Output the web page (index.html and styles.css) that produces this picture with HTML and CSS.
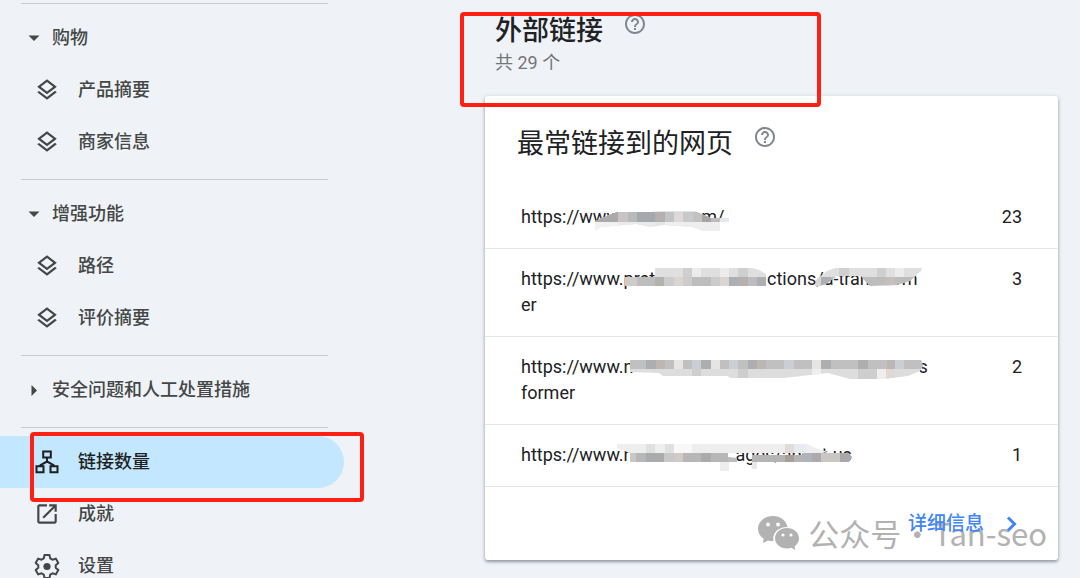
FILE: index.html
```html
<!DOCTYPE html>
<html lang="zh-CN">
<head>
<meta charset="utf-8">
<meta name="viewport" content="width=device-width, initial-scale=1">
<title>外部链接</title>
<link rel="stylesheet" href="styles.css">
</head>
<body>
<svg class="defs" aria-hidden="true">
  <symbol id="layers" viewBox="0 0 24 24"><path d="M11.99 18.54l-7.37-5.73L3 14.07l9 7 9-7-1.63-1.27zM12 16l7.36-5.73L21 9l-9-7-9 7 1.63 1.27L12 16zm0-11.47L17.74 9 12 13.47 6.26 9 12 4.53z"/></symbol>
  <symbol id="help" viewBox="0 0 24 24"><path d="M11 18h2v-2h-2v2zm1-16C6.480 2 2 6.480 2 12s4.480 10 10 10 10-4.480 10-10S17.520 2 12 2zm0 18c-4.410 0-8-3.590-8-8s3.590-8 8-8 8 3.590 8 8-3.590 8-8 8zm0-14c-2.210 0-4 1.790-4 4h2c0-1.100.9-2 2-2s2 .9 2 2c0 2-3 1.750-3 5h2c0-2.250 3-2.500 3-5 0-2.210-1.790-4-4-4z"/></symbol>
</svg>
<div class="app">
  <nav class="sidebar" aria-label="导航">
    <section class="group">
      <button class="group-title" type="button"><svg class="caret" viewBox="0 0 12 12"><path d="M0.500 3.500h11L6 9z"/></svg>购物</button>
      <a class="item" href="#"><svg class="icon"><use href="#layers"/></svg>产品摘要</a>
      <a class="item" href="#"><svg class="icon"><use href="#layers"/></svg>商家信息</a>
    </section>
    <section class="group">
      <button class="group-title" type="button"><svg class="caret" viewBox="0 0 12 12"><path d="M0.500 3.500h11L6 9z"/></svg>增强功能</button>
      <a class="item" href="#"><svg class="icon"><use href="#layers"/></svg>路径</a>
      <a class="item" href="#"><svg class="icon"><use href="#layers"/></svg>评价摘要</a>
    </section>
    <section class="group">
      <button class="group-title" type="button"><svg class="caret" viewBox="0 0 12 12"><path d="M3.500 1v11L9 6.500z"/></svg>安全问题和人工处置措施</button>
    </section>
    <section class="group">
      <a class="item active" href="#"><svg class="icon" viewBox="0 0 26 26"><g fill="none" stroke="currentColor" stroke-width="2"><path d="M9.200 2.500h7.600v6H9.200zM2.500 17.200h7v6h-7zM16.500 17.200h7v6h-7zM13 8.500V13M6.500 17.200V16L13 12.500l6.500 3.500v1.200"/></g></svg>链接数量<span class="mark mark-item"></span></a>
      <a class="item" href="#"><svg class="icon" viewBox="0 0 24 24"><path d="M19 19H5V5h7V3H5c-1.110 0-2 .9-2 2v14c0 1.100.89 2 2 2h14c1.100 0 2-.9 2-2v-7h-2v7zM14 3v2h3.590l-9.830 9.830 1.410 1.410L19 6.410V10h2V3h-7z"/></svg>成就</a>
      <a class="item" href="#"><svg class="icon" viewBox="0 0 26 26"><path fill="none" stroke="currentColor" stroke-width="2" stroke-linejoin="round" d="M10.500 2h5l.7 3.400 2.300 1.300 3.300-1.100 2.500 4.300-2.600 2.300v2.600l2.600 2.300-2.500 4.300-3.300-1.100-2.300 1.300-.7 3.400h-5l-.7-3.400-2.300-1.300-3.300 1.100-2.500-4.300 2.600-2.300v-2.600L1.700 9.900l2.500-4.300 3.300 1.100 2.300-1.300z"/><circle cx="13" cy="13.500" r="3.600"/></svg>设置</a>
    </section>
  </nav>

  <main class="main">
    <header class="page-head">
      <h1>外部链接<button class="help" type="button" aria-label="帮助"><svg><use href="#help"/></svg></button></h1>
      <p>共 29 个</p>
      <span class="mark mark-head"></span>
    </header>

    <section class="card">
      <h2>最常链接到的网页<button class="help" type="button" aria-label="帮助"><svg><use href="#help"/></svg></button></h2>
      <table>
        <tbody>
          <tr>
            <td class="url">https://www<span class="gap gap-a"></span>om/
              <svg class="mosaic" viewBox="485 187 480 61" width="480" height="61">
                <clipPath id="c1"><path d="M595 221l14-6 8-3h33l10-1h35l16 7h18v4h-9v9h-16l-12-4-27-2-15 2-14-3-35 3-6 4h-10z"/></clipPath>
                <g clip-path="url(#c1)">
                  <path fill="#e4e4e4" d="M595 210h134v21H595z"/>
                  <path fill="#aaaaaa" d="M595 212h23v10h-23z"/><path fill="#c8c4c4" d="M618 212h10v10h-10z"/><path fill="#b8babc" d="M628 212h9v10h-9z"/><path fill="#a5a9ad" d="M637 212h18v10h-18z"/><path fill="#b5b0af" d="M655 212h10v10h-10z"/><path fill="#c1c3c4" d="M665 212h9v10h-9z"/><path fill="#ded9d8" d="M674 212h9v10h-9z"/><path fill="#c7c9ca" d="M683 212h10v10h-10z"/><path fill="#c2c2c1" d="M693 212h9v10h-9z"/><path fill="#a8a5a2" d="M702 212h9v10h-9z"/><path fill="#bcbcbd" d="M711 212h9v10h-9z"/>
                  <path fill="#f1f1f1" d="M595 222h23v10h-23z"/><path fill="#e9eaeb" d="M618 222h37v9h-37z"/><path fill="#eeeeee" d="M665 222h55v9h-55z"/><path fill="#e5e9ee" d="M720 218h9v4h-9z"/>
                </g>
              </svg>
            </td>
            <td class="count">23</td>
          </tr>
          <tr>
            <td class="url">https://www.pret<span class="gap gap-b"></span>ctions/a-transform<br>er
              <svg class="mosaic" viewBox="485 249 480 87" width="480" height="87">
                <clipPath id="c2"><path d="M625 277h30v-9h97l7 2 7 4v12H625zM815 286l2-7 10-8 8-3h87l-1 3-11 10-13 4-27 1-6-6-3-4-24 0-11 8-7 2z"/></clipPath>
                <g clip-path="url(#c2)">
                  <path fill="#dfdfdf" d="M625 267h300v10H625z"/><path fill="#ececec" d="M692 267h9v10h-9zM720 267h9v10h-9zM895 267h9v10h-9z"/><path fill="#cecfcf" d="M683 267h9v10h-9zM738 267h10v10h-10zM839 267h10v10h-10zM877 267h9v10h-9z"/>
                  <path fill="#bdbdbe" d="M625 277h300v10H625z"/><path fill="#cccccc" d="M625 277h12v10h-12zM664 277h10v10h-10zM683 277h9v10h-9zM711 277h9v10h-9z"/><path fill="#dbd5d2" d="M674 277h9v10h-9zM720 277h9v10h-9zM815 277h6v10h-6z"/><path fill="#b5b1ae" d="M655 277h9v10h-9zM738 277h10v10h-10z"/><path fill="#acb0b5" d="M729 277h9v10h-9zM757 277h9v10h-9zM821 277h10v10h-10z"/><path fill="#c6bfbb" d="M886 277h9v10h-9z"/>
                </g>
              </svg>
            </td>
            <td class="count">3</td>
          </tr>
          <tr>
            <td class="url">https://www.n<span class="gap gap-c"></span>s<br>former
              <svg class="mosaic" viewBox="485 337 480 87" width="480" height="87">
                <clipPath id="c3"><path d="M630 360h291l2 6-3 5-12 5-25 3h-33l-22-6-44 5h-53l-4-2H663l-4-3-29-1z"/></clipPath>
                <g clip-path="url(#c3)">
                  <path fill="#dddddd" d="M630 359h294v20H630z"/>
                  <path fill="#c0c0c0" d="M630 360h294v9H630z"/><path fill="#acaeb0" d="M646 360h10v9h-10zM701 360h10v9h-10zM748 360h10v9h-10zM821 360h10v9h-10zM858 360h10v9h-10z"/><path fill="#bdb6b2" d="M656 360h9v9h-9zM757 360h9v9h-9zM887 360h8v9h-8z"/><path fill="#e7e5e3" d="M674 360h9v9h-9zM711 360h9v9h-9zM812 360h9v9h-9z"/><path fill="#cbced4" d="M692 360h9v9h-9zM729 360h9v9h-9zM784 360h10v9h-10zM895 360h9v9h-9z"/>
                  <path fill="#cecece" d="M692 369h9v10h-9zM738 369h10v10h-10zM858 369h19v10h-19z"/><path fill="#eeeeee" d="M812 369h9v10h-9zM877 369h9v10h-9z"/><path fill="#dfd8d5" d="M886 369h9v10h-9z"/>
                </g>
              </svg>
            </td>
            <td class="count">2</td>
          </tr>
          <tr>
            <td class="url">https://www.n<span class="gap gap-d"></span>ages/about-us
              <svg class="mosaic" viewBox="485 425 480 61" width="480" height="61">
                <path fill="#eeeeee" d="M617 444h190l6 3 15 5-7 1H630l-13-5z"/><path fill="#dfe1e1" d="M646 444h9v9h-9zM665 444h9v9h-9z"/><path fill="#e2dcd9" d="M785 444h9v9h-9z"/><path fill="#e7eaee" d="M794 444h12v9h-12z"/>
                <path fill="#f8f8f8" d="M674 444h18v9h-18z"/>
                <path fill="#b7b7b7" d="M630 453h98v9h-98z"/><path fill="#c8c8c8" d="M630 453h6v9h-6zM664 453h19v9h-19z"/><path fill="#d1cac6" d="M674 453h9v9h-9z"/><path fill="#a9abac" d="M646 453h18v9h-18zM701 453h10v9h-10z"/><path fill="#bcbcbc" d="M728 457l9 1v4h-9z"/>
                <path fill="#ededed" d="M720 462h9v9h-9z"/><path fill="#e7e8e8" d="M752 462h5v7h-5z"/>
                <path fill="#b4b4b5" d="M752 455h74v7h-74z"/><path fill="#a59e9b" d="M785 455h9v7h-9z"/><path fill="#b0b4b8" d="M803 453h9v9h-9z"/><path fill="#acaaaa" d="M812 453h9v9h-9z"/><path fill="#c8c7c4" d="M821 453h19v9h-19z"/><path fill="#aaa8a9" d="M840 453h9l3 4-3 5h-9z"/>
              </svg>
            </td>
            <td class="count">1</td>
          </tr>
        </tbody>
      </table>
      <footer>
        <div class="watermark">
          <svg viewBox="0 0 42 34"><path d="M15 0C6.500 0 0 5.600 0 12.700c0 4 2 7.500 5.600 9.900L5 27l5-2.600c1.800.5 3.600.7 5.500.6C14 17 20 11 29.500 11 28.200 4.600 22.500 0 15 0z"/><path d="M29 12c-6.800 0-12 4.600-12 10.200S22.200 32.500 29 32.500c1.500 0 3-.2 4.400-.7l4 2.200-.8-3.600c2.700-2 4.400-4.900 4.400-8.200C41 16.600 35.800 12 29 12z"/><g fill="#fff"><circle cx="10" cy="8.500" r="2"/><circle cx="20" cy="8.500" r="2"/><circle cx="25" cy="19" r="1.600"/><circle cx="33" cy="19" r="1.600"/></g></svg>
          <span>公众号</span><span class="dot">·</span><span>Tan-seo</span>
        </div>
        <a class="more" href="#">详细信息<svg viewBox="0 0 12 16"><path d="M2 1.500L8.500 8 2 14.500"/></svg></a>
      </footer>
    </section>
  </main>
</div>
</body>
</html>
```
FILE: styles.css
```css
* { box-sizing: border-box; }

body {
  margin: 0;
  background: #eff3f8;
  color: #202124;
  font-family: Roboto, "Noto Sans CJK SC", sans-serif;
  font-size: 18px;
}

h1, h2, p { margin: 0; }

button {
  border: 0;
  padding: 0;
  background: none;
  color: inherit;
  font: inherit;
  cursor: pointer;
}

a { color: inherit; text-decoration: none; }

svg { flex: none; fill: currentColor; }

.defs { position: absolute; width: 0; height: 0; }

.app {
  display: grid;
  grid-template-columns: 344px 1fr;
  height: 100vh;
  overflow: hidden;
}

/* Sidebar */
.sidebar {
  padding-top: 3px;
  color: #444746;
  font-weight: 500;
}

.group { padding-bottom: 11px; }

.group::before {
  content: "";
  display: block;
  height: 1px;
  margin: 0 16px 8px 21px;
  background: #c8cccd;
}

.group-title, .item {
  display: flex;
  align-items: center;
  width: 100%;
  height: 52px;
  padding-bottom: 4px;
}

.group-title { gap: 12px; padding-left: 28px; }

.caret { width: 12px; height: 12px; margin-top: 4px; }

.item { gap: 18px; padding-left: 34px; }

.icon { width: 26px; height: 26px; margin-top: 4px; }

.active {
  position: relative;
  border-radius: 0 26px 26px 0;
  background: #c2e7ff;
  color: #1f1f1f;
}

/* Highlight frames */
.mark {
  position: absolute;
  border: 4px solid #ff1f13;
  border-radius: 4px;
  pointer-events: none;
}

.mark-item { inset: -4px -20px -14px 30px; }

.mark-head { top: 12px; left: -25px; width: 361px; height: 95px; }

/* Content */
.main { padding: 0 22px 0 141px; }

.page-head { position: relative; padding: 11px 0 21px 10px; }

h1, h2 {
  display: flex;
  align-items: center;
  gap: 20px;
  font-size: 27px;
  line-height: 40px;
}

h1 { font-weight: 500; }
h2 { padding: 28px 32px 23px; font-weight: 400; }

.page-head p { line-height: 24px; color: #757575; }

.help { align-self: flex-start; height: 26px; color: #80868b; }
.help svg { display: block; width: 24px; height: 24px; }

.card {
  border-radius: 3px;
  background: #fff;
  box-shadow: 0 2px 3px rgba(60, 64, 67, 0.4), 0 1px 5px rgba(60, 64, 67, 0.2);
}

table { width: 100%; border-collapse: separate; border-spacing: 0; }

td {
  padding: 17px 36px 18px;
  border-bottom: 1px solid #e3e4e6;
  line-height: 26px;
  vertical-align: top;
}

.url { position: relative; white-space: nowrap; }

.count { text-align: right; }

.gap { display: inline-block; }
.gap-a { width: 71px; }
.gap-b { width: 112px; }
.gap-c { width: 285px; }
.gap-d { width: 102px; }

.mosaic { position: absolute; top: 0; left: 0; }

footer {
  position: relative;
  display: flex;
  justify-content: flex-end;
  padding: 20px 40px 20px 32px;
}

.more {
  position: relative;
  display: flex;
  align-items: center;
  gap: 22px;
  color: #4285f4;
  font-size: 19px;
  font-weight: 500;
  line-height: 33px;
}

.more svg {
  width: 12px;
  height: 16px;
  fill: none;
  stroke: currentColor;
  stroke-width: 3;
}

.watermark {
  position: absolute;
  top: 24px;
  right: 11px;
  display: flex;
  align-items: center;
  gap: 8px;
  color: #b2b2b2;
  font-family: "Noto Sans CJK SC", sans-serif;
  font-size: 31px;
  line-height: 44px;
  white-space: nowrap;
}

.watermark svg { width: 42px; height: 34px; }

.dot {
  display: flex;
  justify-content: center;
  width: 16px;
}
```
